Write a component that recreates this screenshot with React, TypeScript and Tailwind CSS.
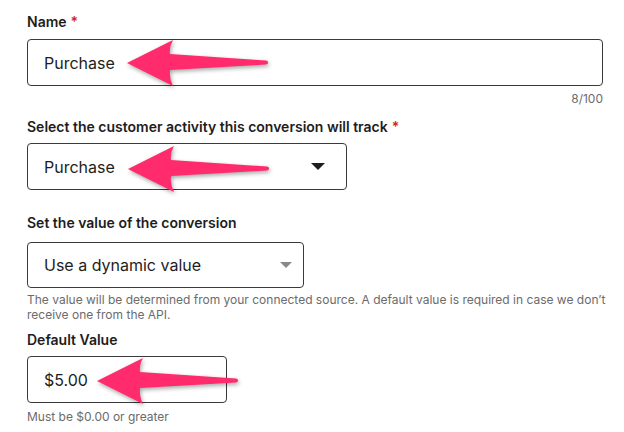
import React from "react";

function Arrow({ className }: { className: string }) {
  return (
    <svg
      width="150"
      height="52"
      viewBox="0 0 150 52"
      className={`pointer-events-none absolute drop-shadow-[1px_2px_2px_rgba(0,0,0,0.35)] ${className}`}
    >
      <path
        d="M2 26 L48 3 Q44 10 45 17 L141 23.5 A2 2 0 0 1 141 27.5 L45 33 Q44 41 48 49 Z"
        fill="#ff2b6c"
      />
    </svg>
  );
}

function Label({ text, required }: { text: string; required?: boolean }) {
  return (
    <div className="text-[14px] font-semibold leading-5 text-[#1d1d1d]">
      {text}
      {required && <span className="ml-1 text-[#d0271d]">*</span>}
    </div>
  );
}

function Caret({ gray }: { gray?: boolean }) {
  return gray ? (
    <svg width="12" height="6" viewBox="0 0 12 6" className="mr-[11px]">
      <path d="M0 0 H12 L6 6 Z" fill="#8a8a8a" />
    </svg>
  ) : (
    <svg width="14" height="7" viewBox="0 0 14 7" className="mr-[21px]">
      <path d="M0 0 H14 L7 7 Z" fill="#1d1d1d" />
    </svg>
  );
}

export default function App() {
  return (
    <div className="min-h-[432px] bg-white pl-[27px] pt-3 font-['Inter',sans-serif] text-[#1d1d1d]">
      <Label text="Name" required />
      <div className="relative mt-[7px] w-[576px]">
        <div className="flex h-[47px] items-center rounded border border-[#3a3a3a] px-4 text-[16px]">Purchase</div>
        <Arrow className="left-[98px] top-[-2px]" />
      </div>
      <div className="mt-[5px] w-[576px] text-right text-[12px] leading-[15px] text-[#6b6b6b]">8/100</div>

      <div className="mt-[11px]">
        <Label text="Select the customer activity this conversion will track" required />
      </div>
      <div className="relative mt-[6px] w-[320px]">
        <div className="flex h-[47px] items-center justify-between rounded border border-[#3a3a3a] pl-4 text-[16px]">
          <span>Purchase</span>
          <Caret />
        </div>
        <Arrow className="left-[99px] top-[0px]" />
      </div>

      <div className="mt-[23px]">
        <Label text="Set the value of the conversion" />
      </div>
      <div className="mt-[9px] flex h-[46px] w-[277px] items-center justify-between rounded border border-[#3a3a3a] pl-4 text-[16px]">
        <span>Use a dynamic value</span>
        <Caret gray />
      </div>
      <p className="mt-[4px] w-[594px] text-[12px] leading-[15px] text-[#6b6b6b]">
        The value will be determined from your connected source. A default value is required in case we don’t receive one from the API.
      </p>

      <div className="mt-[8px]">
        <Label text="Default Value" />
      </div>
      <div className="relative mt-[6px] w-[200px]">
        <div className="flex h-[47px] items-center rounded border border-[#3a3a3a] px-4 text-[16px]">$5.00</div>
        <Arrow className="left-[68px] top-[-1px]" />
      </div>
      <p className="mt-[6px] text-[12px] leading-[15px] text-[#6b6b6b]">Must be $0.00 or greater</p>
    </div>
  );
}
